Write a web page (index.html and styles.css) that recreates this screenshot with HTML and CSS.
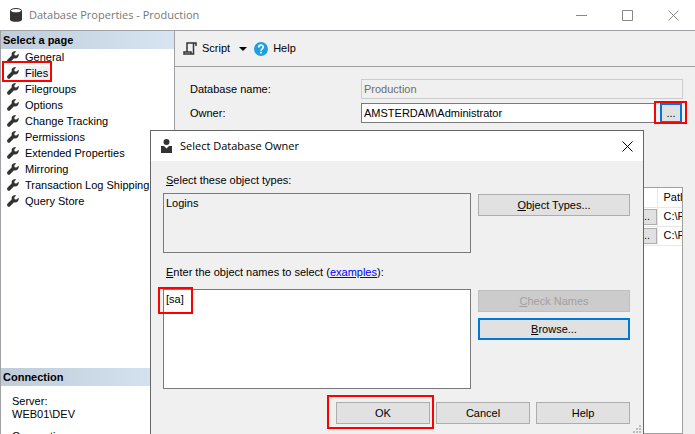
FILE: index.html
```html
<!DOCTYPE html>
<html lang="en">
<head>
<meta charset="utf-8">
<title>Database Properties - Production</title>
<link rel="stylesheet" href="styles.css">
</head>
<body>
<svg class="defs" aria-hidden="true">
  <symbol id="wrench" viewBox="0 0 12 12">
    <path d="M11.6 2.7 9.4 4.6 7.6 4.3 7.3 2.6 9.2.5C7.800-.1 6.200.2 5.300 1.300 4.600 2.200 4.400 3.300 4.700 4.400L.6 8.600C-.1 9.400-.1 10.500.6 11.200 1.300 11.900 2.400 11.900 3.100 11.200L7.100 7.200C8.300 7.700 9.700 7.400 10.600 6.500 11.700 5.500 12 4 11.600 2.700Z"/>
  </symbol>
</svg>
<div class="window">
  <header class="titlebar">
    <svg class="title-icon" viewBox="0 0 12 14" aria-hidden="true"><path fill="#333" d="M0 2.500V11.500C0 14.600 12 14.600 12 11.500V2.500Z"/><ellipse cx="6" cy="2.700" rx="5.500" ry="2.200" fill="#fff" stroke="#333"/></svg>
    <h1>Database Properties - Production</h1>
    <div class="controls">
      <button aria-label="Minimize"><svg viewBox="0 0 11 11"><path d="M0 5.500H11"/></svg></button>
      <button aria-label="Maximize"><svg viewBox="0 0 11 11"><path d="M.5.5H10.500V10.500H.5Z"/></svg></button>
      <button aria-label="Close"><svg viewBox="0 0 11 11"><path d="M.5.5 10.500 10.500M10.500.5.5 10.500"/></svg></button>
    </div>
  </header>
  <div class="content">
    <aside class="sidebar">
      <h2>Select a page</h2>
      <ul class="pages">
        <li><svg><use href="#wrench"/></svg><a href="#">General</a></li>
        <li class="marked"><svg><use href="#wrench"/></svg><a href="#" class="current">Files</a><span class="mark mark-page"></span></li>
        <li><svg><use href="#wrench"/></svg><a href="#">Filegroups</a></li>
        <li><svg><use href="#wrench"/></svg><a href="#">Options</a></li>
        <li><svg><use href="#wrench"/></svg><a href="#">Change Tracking</a></li>
        <li><svg><use href="#wrench"/></svg><a href="#">Permissions</a></li>
        <li><svg><use href="#wrench"/></svg><a href="#">Extended Properties</a></li>
        <li><svg><use href="#wrench"/></svg><a href="#">Mirroring</a></li>
        <li><svg><use href="#wrench"/></svg><a href="#">Transaction Log Shipping</a></li>
        <li><svg><use href="#wrench"/></svg><a href="#">Query Store</a></li>
      </ul>
      <h2>Connection</h2>
      <dl class="connection">
        <dt>Server:</dt>
        <dd>WEB01\DEV</dd>
        <dt>Connection:</dt>
      </dl>
    </aside>
    <main class="main">
      <div class="toolbar">
        <button><svg class="script-icon" viewBox="0 0 14 13" aria-hidden="true"><path fill="none" stroke="#333" stroke-width="1.500" d="M4 10V1H13V4M10.500 1V12H1V10H8V12"/></svg>Script</button>
        <button class="arrow" aria-label="Script options"><svg viewBox="0 0 8 4"><path d="M0 0H8L4 4Z"/></svg></button>
        <button><svg class="help-icon" viewBox="0 0 14 14" aria-hidden="true"><circle cx="7" cy="7" r="7" fill="#1ba1e2"/><path d="M4.700 5.500C4.700 2.300 9.300 2.400 9.300 5.100 9.300 6.800 7 6.800 7 8.700" fill="none" stroke="#fff" stroke-width="1.600"/><path d="M6.100 9.800H7.900V11.500H6.100Z" fill="#fff"/></svg>Help</button>
      </div>
      <form class="form">
        <label for="dbname">Database name:</label>
        <input id="dbname" value="Production" disabled>
        <label for="owner">Owner:</label>
        <div class="owner">
          <input id="owner" value="AMSTERDAM\Administrator">
          <div class="pick"><button type="button" aria-label="Browse owner">...</button><span class="mark mark-pick"></span></div>
        </div>
      </form>
      <div class="grid">
        <table>
          <thead><tr><th></th><th class="path">Path</th></tr></thead>
          <tbody>
            <tr><td><button>...</button></td><td class="path">C:\P</td></tr>
            <tr><td><button>...</button></td><td class="path">C:\P</td></tr>
          </tbody>
        </table>
      </div>
    </main>
  </div>

  <section class="dialog" role="dialog" aria-labelledby="dialog-title">
    <header class="dialog-title">
      <svg class="user-icon" viewBox="0 0 11 14" aria-hidden="true"><path fill="#333" d="M5.500 0A3 3 0 0 1 5.500 6 3 3 0 0 1 5.500 0ZM0 7H3L5.500 9.500 8 7H11V14H0Z"/></svg>
      <h2 id="dialog-title">Select Database Owner</h2>
      <button aria-label="Close"><svg viewBox="0 0 11 11"><path d="M.5.5 10.500 10.500M10.500.5.5 10.500"/></svg></button>
    </header>
    <form class="dialog-body">
      <label for="types"><u>S</u>elect these object types:</label>
      <div class="row">
        <textarea id="types" class="types" readonly>Logins</textarea>
        <div class="side"><button type="button"><u>O</u>bject Types...</button></div>
      </div>
      <div class="caption"><label for="names"><u>E</u>nter the object names to select</label> (<a href="#">examples</a>):</div>
      <div class="row">
        <div class="names-box"><textarea id="names" class="names">[sa]</textarea><span class="mark mark-names"></span></div>
        <div class="side">
          <button type="button" disabled><u>C</u>heck Names</button>
          <button type="button" class="focus"><u>B</u>rowse...</button>
        </div>
      </div>
      <div class="actions">
        <div class="ok"><button type="button">OK</button><span class="mark mark-ok"></span></div>
        <button type="button">Cancel</button>
        <button type="button">Help</button>
      </div>
    </form>
    <svg class="grip" viewBox="0 0 8 8" aria-hidden="true"><path fill="#bbb" d="M6 0h2v2H6zM3 3h2v2H3zM6 3h2v2H6zM0 6h2v2H0zM3 6h2v2H3zM6 6h2v2H6z"/></svg>
  </section>
</div>
</body>
</html>
```
FILE: styles.css
```css
* { box-sizing: border-box; }
body, h1, h2, ul, dl, dd { margin: 0; padding: 0; }
body, button, input, textarea {
  font: 11px/13px "Liberation Sans", Arial, sans-serif;
  color: #000;
}
button { padding: 0; border: 1px solid #adadad; border-radius: 0; background: #e1e1e1; }
svg { display: block; flex: none; }
.defs { position: absolute; width: 0; height: 0; }

.window { position: relative; display: flex; flex-direction: column; height: 100vh; overflow: hidden; background: #fff; }

.titlebar { display: flex; align-items: center; height: 30px; padding-left: 10px; flex: none; }
.title-icon { width: 12px; height: 14px; }
h1, .dialog-title h2 { font: 11px/16px "Open Sans", "Segoe UI", sans-serif; }
h1 { margin-left: 7px; color: #777; }
.controls { display: flex; margin-left: auto; }
.controls button { display: grid; place-items: center; width: 46px; height: 28px; border: 0; background: none; }
.controls { margin-right: -1px; }
.controls svg, .dialog-title button svg { width: 11px; height: 11px; fill: none; stroke: #888; }

.content { display: flex; flex: 1; min-height: 0; border-top: 1px solid #a0a0a5; }
.sidebar { display: flex; flex-direction: column; width: 175px; flex: none; border: solid #a0a0a5; border-width: 0 1px; }
.sidebar h2 { height: 18px; padding-left: 2px; flex: none; font: bold 11px/18px "Liberation Sans", Arial, sans-serif; background: linear-gradient(90deg, #bfcddb, #d7e4f2); }
.pages { flex: 1; list-style: none; }
.pages li { display: flex; align-items: center; gap: 5px; height: 16px; padding-left: 6px; position: relative; }
.pages svg { width: 12px; height: 12px; fill: #333; }
.pages a { padding: 1px; color: #000; text-decoration: none; }
.pages .current { background: #f0f0f0; }
.connection { height: 48px; padding: 9px 11px 0; overflow: hidden; flex: none; }
.connection dd { margin-bottom: 9px; }

.main { display: flex; flex-direction: column; flex: 1; min-width: 0; background: #f0f0f0; }
.toolbar { display: flex; align-items: center; height: 36px; padding-left: 8px; flex: none; border-bottom: 1px solid #a0a0a5; }
.toolbar button { display: flex; align-items: center; gap: 5px; border: 0; background: none; }
.script-icon { width: 14px; height: 13px; }
.help-icon { width: 14px; height: 14px; }
.toolbar .arrow { margin: 0 7px 0 9px; }
.arrow svg { width: 8px; height: 4px; }

.form { display: grid; grid-template-columns: 171px 1fr; row-gap: 4px; align-items: center; padding: 12px 12px 0 15px; }
.form input { width: 100%; min-width: 0; height: 20px; padding: 0 2px; border: 1px solid #7a7a7a; border-radius: 0; background: #fff; }
.form input:disabled { border-color: #ccc; background: #f0f0f0; color: #6d6d6d; }
.owner { display: flex; gap: 4px; padding-right: 1px; }
.owner input { flex: 1; }
.pick { position: relative; }
.pick button { width: 22px; height: 20px; border: 2px solid #0078d7; }

.grid { flex: 1; margin: 64px 12px 0 15px; overflow: hidden; border: 1px solid #a0a0a0; background: #fff; }
table { width: 100%; border-collapse: collapse; table-layout: fixed; }
tr { height: 19px; }
th, td { padding: 0; border: solid #e8e8e8; border-width: 0 1px 1px 0; text-align: right; font-weight: normal; white-space: nowrap; overflow: hidden; }
.path { width: 25px; padding-left: 6px; text-align: left; border-right: 0; }
td button { width: 22px; height: 16px; line-height: 11px; }

.dialog { position: absolute; top: 130px; right: 51px; bottom: 0; left: 150px; border: solid #666; border-width: 1px 1px 0; background: #f0f0f0; }
.dialog-title { display: flex; align-items: center; height: 30px; padding: 0 10px; background: #fff; }
.user-icon { width: 11px; height: 14px; }
.dialog-title h2 { flex: 1; margin-left: 8px; }
.dialog-title button { border: 0; background: none; }
.dialog-title button svg { stroke: #000; }
.dialog-body { padding: 13px 13px 0 12px; }
.dialog-body > label, .caption { display: block; padding-left: 3px; }
.caption { margin-top: 13px; }
.caption a { color: #00f; }
.row { display: flex; gap: 7px; margin-top: 6px; }
.caption + .row { margin-top: 10px; }
textarea { display: block; flex: 1; width: 100%; padding: 3px 2px; border: 1px solid #7a7a7a; border-radius: 0; resize: none; outline: 0; }
.types { height: 60px; background: #f0f0f0; }
.names-box { position: relative; flex: 1; }
.names { height: 100px; }
.side { display: flex; flex-direction: column; gap: 6px; width: 152px; padding-top: 1px; }
.side button, .actions button { height: 22px; }
.side button:disabled { border-color: #bfbfbf; background: #ccc; color: #a0a0a0; }
.side .focus { border: 2px solid #0078d7; }
.actions { display: flex; justify-content: flex-end; gap: 6px; margin-top: 13px; }
.actions button { width: 94px; }
.ok { position: relative; }
.grip { position: absolute; right: 2px; bottom: 1px; width: 8px; height: 8px; }

.mark { position: absolute; border: 2px solid #f00; pointer-events: none; }
.mark-page { left: 1px; top: -4px; width: 50px; height: 21px; }
.mark-pick { inset: -2px -5px -1px -6px; }
.mark-names { left: -5px; top: -2px; width: 35px; height: 27px; }
.mark-ok { inset: -7px -4px -5px -9px; }
```
